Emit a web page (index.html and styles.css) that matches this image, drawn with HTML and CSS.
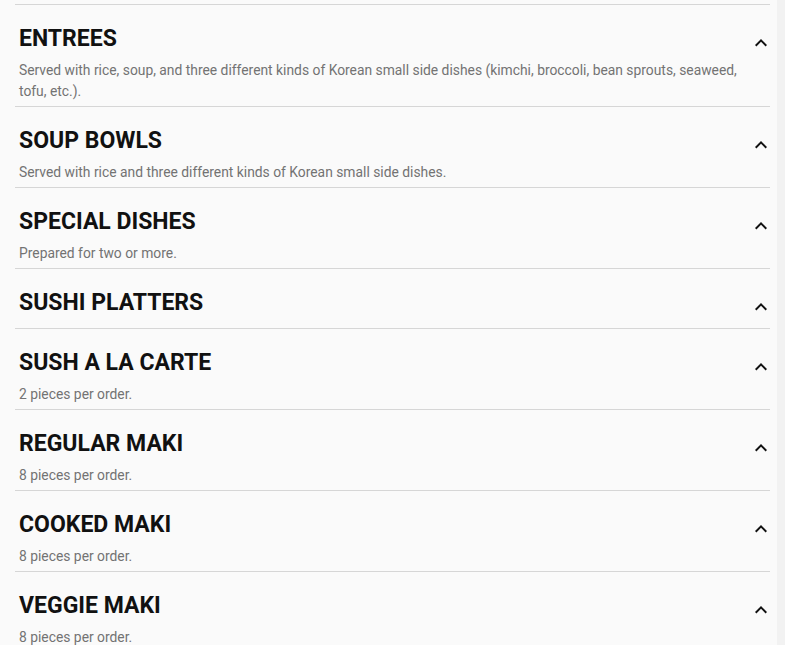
FILE: index.html
```html
<!DOCTYPE html>
<html>
<head>
<meta charset="utf-8">
<link rel="stylesheet" href="styles.css">
</head>
<body>
<div class="page">
  <div class="menu">
    <div class="prev"></div>
    <div class="cat">
      <div class="cat-head"><h2 class="cat-title">ENTREES</h2><svg class="chev" viewBox="0 0 24 24"><path d="M12 8l-6 6 1.41 1.41L12 10.83l4.59 4.58L18 14z"/></svg></div>
      <p class="cat-desc">Served with rice, soup, and three different kinds of Korean small side dishes (kimchi, broccoli, bean sprouts, seaweed, tofu, etc.).</p>
    </div>
    <div class="cat">
      <div class="cat-head"><h2 class="cat-title">SOUP BOWLS</h2><svg class="chev" viewBox="0 0 24 24"><path d="M12 8l-6 6 1.41 1.41L12 10.83l4.59 4.58L18 14z"/></svg></div>
      <p class="cat-desc">Served with rice and three different kinds of Korean small side dishes.</p>
    </div>
    <div class="cat">
      <div class="cat-head"><h2 class="cat-title">SPECIAL DISHES</h2><svg class="chev" viewBox="0 0 24 24"><path d="M12 8l-6 6 1.41 1.41L12 10.83l4.59 4.58L18 14z"/></svg></div>
      <p class="cat-desc">Prepared for two or more.</p>
    </div>
    <div class="cat">
      <div class="cat-head"><h2 class="cat-title">SUSHI PLATTERS</h2><svg class="chev" viewBox="0 0 24 24"><path d="M12 8l-6 6 1.41 1.41L12 10.83l4.59 4.58L18 14z"/></svg></div>
    </div>
    <div class="cat">
      <div class="cat-head"><h2 class="cat-title">SUSH A LA CARTE</h2><svg class="chev" viewBox="0 0 24 24"><path d="M12 8l-6 6 1.41 1.41L12 10.83l4.59 4.58L18 14z"/></svg></div>
      <p class="cat-desc">2 pieces per order.</p>
    </div>
    <div class="cat">
      <div class="cat-head"><h2 class="cat-title">REGULAR MAKI</h2><svg class="chev" viewBox="0 0 24 24"><path d="M12 8l-6 6 1.41 1.41L12 10.83l4.59 4.58L18 14z"/></svg></div>
      <p class="cat-desc">8 pieces per order.</p>
    </div>
    <div class="cat">
      <div class="cat-head"><h2 class="cat-title">COOKED MAKI</h2><svg class="chev" viewBox="0 0 24 24"><path d="M12 8l-6 6 1.41 1.41L12 10.83l4.59 4.58L18 14z"/></svg></div>
      <p class="cat-desc">8 pieces per order.</p>
    </div>
    <div class="cat">
      <div class="cat-head"><h2 class="cat-title">VEGGIE MAKI</h2><svg class="chev" viewBox="0 0 24 24"><path d="M12 8l-6 6 1.41 1.41L12 10.83l4.59 4.58L18 14z"/></svg></div>
      <p class="cat-desc">8 pieces per order.</p>
    </div>
  </div>
  <div class="rail"></div>
</div>
</body>
</html>
```
FILE: styles.css
```css
html, body {
  margin: 0;
  padding: 0;
  height: 100%;
  overflow: hidden;
}
body {
  background: #fafafa;
  font-family: Roboto, "Liberation Sans", sans-serif;
}
.page {
  display: flex;
  height: 100%;
}
.menu {
  flex: 1;
  padding: 0 7px 0 15px;
}
.rail {
  width: 8px;
  background: #f2f2f2;
}
.prev {
  height: 4px;
  border-bottom: 1px solid #d6d6d6;
}
.cat {
  border-bottom: 1px solid #d6d6d6;
  padding: 18px 0 4px 4px;
}
.cat-head {
  display: flex;
  align-items: flex-start;
  justify-content: space-between;
  margin-bottom: 5px;
}
.cat-title {
  margin: 0;
  font-size: 23px;
  line-height: 32px;
  font-weight: 700;
  color: #111;
}
.chev {
  width: 24px;
  height: 24px;
  margin: 8px -3px 0 0;
  fill: #111;
  flex-shrink: 0;
}
.cat-desc {
  margin: 0;
  font-size: 13.85px;
  line-height: 21px;
  color: #737373;
  padding-right: 24px;
}
```
